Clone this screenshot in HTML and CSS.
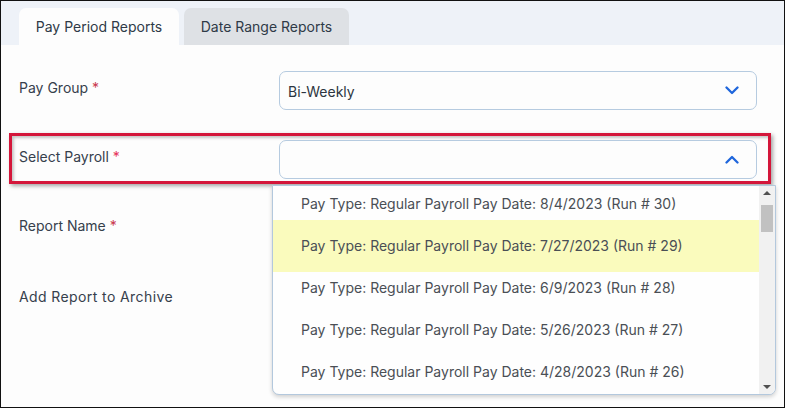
FILE: index.html
```html
<!DOCTYPE html>
<html>
<head>
<meta charset="utf-8">
<link rel="stylesheet" href="styles.css">
</head>
<body>
<div class="frame">
  <div class="tabbar">
    <div class="tab active">Pay Period Reports</div>
    <div class="tab">Date Range Reports</div>
  </div>
  <div class="form">
    <div class="row">
      <div class="label">Pay Group <span class="req">*</span></div>
      <div class="select">
        <span class="value">Bi-Weekly</span>
        <svg class="chev" width="14" height="9" viewBox="0 0 14 9"><path d="M1.5 1.5 L7 7 L12.5 1.5" fill="none" stroke="#1f66dc" stroke-width="2.3" stroke-linecap="round" stroke-linejoin="round"/></svg>
      </div>
    </div>
    <div class="row highlight">
      <div class="redbox"></div>
      <div class="label">Select Payroll <span class="req pink">*</span></div>
      <div class="select">
        <span class="value"></span>
        <svg class="chev" width="14" height="9" viewBox="0 0 14 9"><path d="M1.5 7.5 L7 2 L12.5 7.5" fill="none" stroke="#1f66dc" stroke-width="2.3" stroke-linecap="round" stroke-linejoin="round"/></svg>
      </div>
      <div class="dropdown">
        <div class="list">
          <div class="item first">Pay Type: Regular Payroll Pay Date: 8/4/2023 (Run # 30)</div>
          <div class="item hover">Pay Type: Regular Payroll Pay Date: 7/27/2023 (Run # 29)</div>
          <div class="item">Pay Type: Regular Payroll Pay Date: 6/9/2023 (Run # 28)</div>
          <div class="item">Pay Type: Regular Payroll Pay Date: 5/26/2023 (Run # 27)</div>
          <div class="item">Pay Type: Regular Payroll Pay Date: 4/28/2023 (Run # 26)</div>
        </div>
        <div class="scrollbar">
          <div class="arrow up"></div>
          <div class="thumb"></div>
          <div class="spacer"></div>
          <div class="arrow down"></div>
        </div>
      </div>
    </div>
    <div class="row">
      <div class="label">Report Name <span class="req">*</span></div>
    </div>
    <div class="row">
      <div class="label wide">Add Report to Archive</div>
    </div>
  </div>
</div>
</body>
</html>
```

FILE: styles.css
```css
* { box-sizing: border-box; }
html, body { margin: 0; padding: 0; }
body {
  font-family: Inter, "Noto Sans", "DejaVu Sans", sans-serif;
  font-size: 14px;
  color: #36404c;
}
.frame {
  width: 785px;
  height: 408px;
  border: 1px solid #111;
  background: #fdfdfd;
  overflow: hidden;
  position: relative;
}
.tabbar {
  height: 44px;
  background: #eef2f8;
  display: flex;
  align-items: flex-end;
  gap: 5px;
  padding-left: 18px;
}
.tab {
  height: 37px;
  border-radius: 7px 7px 0 0;
  background: #dee1e5;
  display: flex;
  align-items: center;
  justify-content: center;
  color: #2f3a47;
  font-size: 14px;
  width: 165px;
}
.tab.active {
  background: #fdfdfd;
  width: 160px;
}
.form {
  padding: 26px 0 0 18px;
  display: flex;
  flex-direction: column;
  gap: 30px;
}
.row {
  height: 39px;
  display: flex;
  align-items: flex-start;
  position: relative;
}
.label {
  width: 260px;
  padding-top: 7px;
  line-height: 20px;
  color: #36404c;
}
.label.wide { letter-spacing: 0.4px; padding-top: 9px; }
.req { color: #c9394e; }
.req.pink { color: #e6345a; }
.select {
  width: 478px;
  height: 39px;
  border: 1px solid #b6cbe0;
  border-radius: 7px;
  background: #fdfdfd;
  display: flex;
  align-items: center;
  justify-content: space-between;
  padding: 0 17px 0 8px;
  position: relative;
  z-index: 2;
}
.value { color: #2c3540; padding-top: 2px; }
.chev { display: block; }
.redbox {
  position: absolute;
  left: -10px;
  top: -7px;
  width: 762px;
  height: 51px;
  border: 3px solid #d4163a;
  box-shadow: 2px 2px 4px rgba(0,0,0,0.35), inset 2px 2px 3px rgba(0,0,0,0.22);
  z-index: 1;
}
.dropdown {
  position: absolute;
  left: 253px;
  top: 45px;
  width: 504px;
  height: 210px;
  border: 1px solid #b3c8dd;
  border-radius: 0 0 7px 7px;
  background: #fefefe;
  box-shadow: 0 2px 4px rgba(0,0,0,0.18);
  display: flex;
  overflow: hidden;
  z-index: 3;
}
.list {
  flex: 1;
  display: flex;
  flex-direction: column;
  color: #4a4f55;
}
.item {
  padding: 6px 0 16px 28px;
  line-height: 20px;
  white-space: nowrap;
}
.item.first { padding: 8px 0 6px 28px; }
.item.hover { background: #fafbbd; padding: 16px 0 16px 28px; }
.scrollbar {
  width: 16px;
  background: #f1f1f1;
  display: flex;
  flex-direction: column;
  align-items: center;
}
.arrow {
  width: 0; height: 0;
  border-left: 4px solid transparent;
  border-right: 4px solid transparent;
  margin: 5px 0;
}
.arrow.up { border-bottom: 4px solid #505050; }
.arrow.down { border-top: 4px solid #505050; }
.thumb {
  width: 12px;
  height: 27px;
  background: #c1c1c1;
  margin-top: 5px;
}
.spacer { flex: 1; }
```
